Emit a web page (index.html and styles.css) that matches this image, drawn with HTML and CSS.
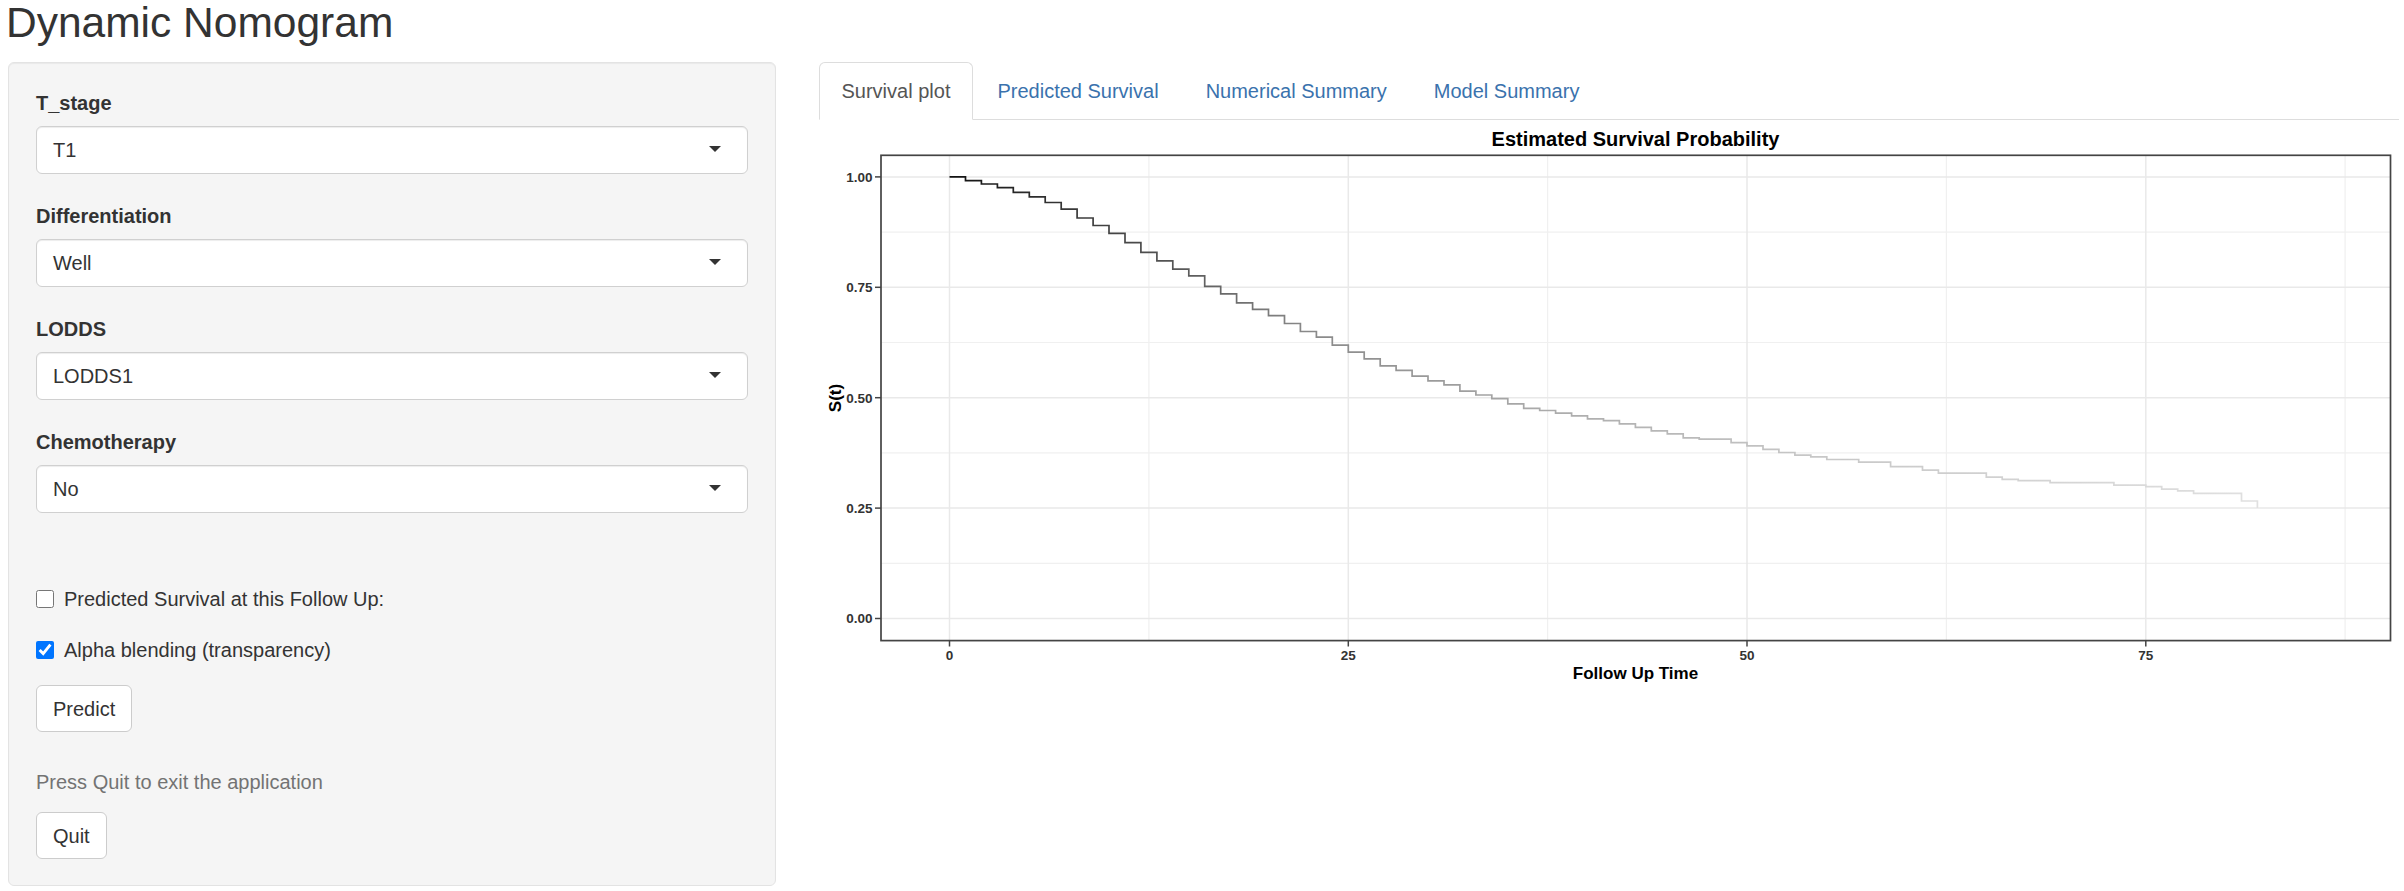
FILE: index.html
```html
<!DOCTYPE html>
<html>
<head>
  <title>Dynamic Nomogram</title>
  <link rel="stylesheet" href="styles.css">
</head>
<body>
  <h1 class="title">Dynamic Nomogram</h1>
  <div class="layout">
    <div class="well">
      <div class="form-group">
        <label class="control-label">T_stage</label>
        <div class="selectize-input">T1</div>
      </div>
      <div class="form-group">
        <label class="control-label">Differentiation</label>
        <div class="selectize-input">Well</div>
      </div>
      <div class="form-group">
        <label class="control-label">LODDS</label>
        <div class="selectize-input">LODDS1</div>
      </div>
      <div class="form-group">
        <label class="control-label">Chemotherapy</label>
        <div class="selectize-input">No</div>
      </div>

      <div class="checkbox first">
        <label><input type="checkbox" name="trySurvival"><span>Predicted Survival at this Follow Up:</span></label>
      </div>
      <div class="checkbox">
        <label><input type="checkbox" name="alpha" checked><span>Alpha blending (transparency)</span></label>
      </div>
      <button class="btn btn-predict" type="button">Predict</button>
      <p class="help-text">Press Quit to exit the application</p>
      <button class="btn" type="button">Quit</button>
    </div>

    <div class="main">
      <ul class="nav-tabs">
        <li class="active"><a href="#">Survival plot</a></li>
        <li><a href="#">Predicted Survival</a></li>
        <li><a href="#">Numerical Summary</a></li>
        <li><a href="#">Model Summary</a></li>
      </ul>
      <div class="tab-content">
        <!-- plot drawn in page coordinates -->
        <svg class="plot" viewBox="819 120 1580 580" width="1580" height="580">
          <defs>
            <linearGradient id="fade" gradientUnits="userSpaceOnUse" x1="949.5" y1="0" x2="2257.4" y2="0">
              <stop offset="0" stop-color="#111"/>
              <stop offset="0.08" stop-color="#333"/>
              <stop offset="0.17" stop-color="#555"/>
              <stop offset="0.27" stop-color="#888"/>
              <stop offset="0.45" stop-color="#aaa"/>
              <stop offset="0.65" stop-color="#c6c6c6"/>
              <stop offset="1" stop-color="#e0e0e0"/>
            </linearGradient>
          </defs>

          <text class="plot-title" x="1635.5" y="146" text-anchor="middle">Estimated Survival Probability</text>

          <g class="grid-minor">
            <line x1="881" x2="2390" y1="232.1" y2="232.1"/>
            <line x1="881" x2="2390" y1="342.5" y2="342.5"/>
            <line x1="881" x2="2390" y1="452.9" y2="452.9"/>
            <line x1="881" x2="2390" y1="563.3" y2="563.3"/>
            <line x1="1148.9" x2="1148.9" y1="155" y2="640.5"/>
            <line x1="1547.6" x2="1547.6" y1="155" y2="640.5"/>
            <line x1="1946.4" x2="1946.4" y1="155" y2="640.5"/>
            <line x1="2345.1" x2="2345.1" y1="155" y2="640.5"/>
          </g>
          <g class="grid-major">
            <line x1="881" x2="2390" y1="176.9" y2="176.9"/>
            <line x1="881" x2="2390" y1="287.3" y2="287.3"/>
            <line x1="881" x2="2390" y1="397.7" y2="397.7"/>
            <line x1="881" x2="2390" y1="508.1" y2="508.1"/>
            <line x1="881" x2="2390" y1="618.5" y2="618.5"/>
            <line x1="949.5" x2="949.5" y1="155" y2="640.5"/>
            <line x1="1348.3" x2="1348.3" y1="155" y2="640.5"/>
            <line x1="1747" x2="1747" y1="155" y2="640.5"/>
            <line x1="2145.8" x2="2145.8" y1="155" y2="640.5"/>
          </g>

          <path class="curve" d="M949.5,176.9H965.5V180.6H981.4V184H997.4V187.6H1013.3V192.4H1029.3V196.8H1045.2V202.5H1061.2V209.1H1077.1V218H1093.1V225.5H1109V233.4H1125V242.7H1140.9V252.4H1156.9V260.8H1172.8V269.2H1188.8V275.8H1204.7V286.4H1220.7V293.9H1236.6V302.8H1252.6V309.4H1268.5V315.6H1284.5V323.5H1300.4V331.5H1316.4V337.2H1332.3V345.1H1348.3V352.2H1364.2V358.8H1380.2V365.9H1396.1V370.3H1412.1V376.1H1428V380.9H1444V384.9H1459.9V391.1H1475.9V395H1491.8V398.6H1507.8V403.9H1523.7V408.3H1539.7V410.5H1555.6V413.2H1571.6V415.8H1587.5V418.9H1603.5V420.7H1619.4V423.8H1635.4V427.3H1651.3V430.8H1667.3V433.9H1683.2V437.9H1699.2V439.2H1731.1V442.7H1747V445.8H1763V449.4H1778.9V452.5H1794.9V455.1H1810.8V456.9H1826.8V459.5H1858.7V462.2H1890.6V466.6H1922.5V470.1H1938.4V473.2H1986.3V477.2H2002.2V479.4H2018.2V480.7H2050.1V482.7H2113.9V485.1H2145.8V486.7H2161.7V489.1H2177.7V490.9H2193.6V493.3H2241.5V501H2257.4V508.1"/>

          <rect class="panel" x="881" y="155.3" width="1509.5" height="485.3"/>

          <g class="ticks">
            <line x1="875" x2="881" y1="176.9" y2="176.9"/>
            <line x1="875" x2="881" y1="287.3" y2="287.3"/>
            <line x1="875" x2="881" y1="397.7" y2="397.7"/>
            <line x1="875" x2="881" y1="508.1" y2="508.1"/>
            <line x1="875" x2="881" y1="618.5" y2="618.5"/>
            <line x1="949.5" x2="949.5" y1="640.6" y2="646.5"/>
            <line x1="1348.3" x2="1348.3" y1="640.6" y2="646.5"/>
            <line x1="1747" x2="1747" y1="640.6" y2="646.5"/>
            <line x1="2145.8" x2="2145.8" y1="640.6" y2="646.5"/>
          </g>
          <g class="tick-labels" text-anchor="end">
            <text x="872.5" y="181.7">1.00</text>
            <text x="872.5" y="292.1">0.75</text>
            <text x="872.5" y="402.5">0.50</text>
            <text x="872.5" y="512.9">0.25</text>
            <text x="872.5" y="623.3">0.00</text>
          </g>
          <g class="tick-labels" text-anchor="middle">
            <text x="949.5" y="659.5">0</text>
            <text x="1348.3" y="659.5">25</text>
            <text x="1747" y="659.5">50</text>
            <text x="2145.8" y="659.5">75</text>
          </g>

          <text class="axis-title" transform="translate(840.5,398) rotate(-90)" text-anchor="middle">S(t)</text>
          <text class="axis-title" x="1635.5" y="678.5" text-anchor="middle">Follow Up Time</text>
        </svg>
      </div>
    </div>
  </div>
</body>
</html>
```

FILE: styles.css
```css
/* page */
body {
  margin: 0;
  padding: 0 5px 0 8px;
  font-family: "Liberation Sans", Arial, sans-serif;
  font-size: 20px;
  line-height: 28px;
  color: #333;
  background: #fff;
}
.title {
  margin: 0 0 16px -2px;
  font-size: 42.5px;
  line-height: 46px;
  font-weight: normal;
  color: #333;
}
.layout {
  display: flex;
  align-items: flex-start;
  gap: 43px;
}

/* sidebar */
.well {
  width: 768px;
  box-sizing: border-box;
  padding: 26px 27px 26px;
  background-color: #f5f5f5;
  border: 1px solid #e3e3e3;
  border-radius: 6px;
  box-shadow: inset 0 1px 1px rgba(0, 0, 0, .05);
}
.form-group {
  margin-bottom: 28px;
}
.control-label {
  display: block;
  font-weight: bold;
  margin-bottom: 9px;
}
.selectize-input {
  position: relative;
  height: 48px;
  box-sizing: border-box;
  padding: 9px 16px;
  background: #fff;
  border: 1px solid #d0d0d0;
  border-radius: 6px;
  box-shadow: inset 0 1px 1px rgba(0, 0, 0, .075);
}
.selectize-input::after {
  content: "";
  position: absolute;
  right: 26px;
  top: 19px;
  border-style: solid;
  border-width: 6px 6px 0;
  border-color: #333 transparent transparent;
}
.checkbox {
  margin-top: 23px;
}
/* the form-group margin collapses into this one */
.checkbox.first {
  margin-top: 72px;
}
.checkbox label {
  display: flex;
  align-items: center;
  gap: 10px;
}
.checkbox input {
  width: 18px;
  height: 18px;
  margin: 0;
}
.btn {
  display: block;
  height: 47px;
  padding: 0 16px;
  font: inherit;
  color: #333;
  background-color: #fff;
  border: 1px solid #ccc;
  border-radius: 6px;
  cursor: pointer;
}
.btn-predict {
  margin-top: 21px;
}
.help-text {
  margin: 36px 0 16px;
  color: #737373;
}

/* main panel */
.main {
  flex: 1;
  min-width: 0;
}
.nav-tabs {
  display: flex;
  list-style: none;
  margin: 0;
  padding: 0;
  border-bottom: 1px solid #ddd;
}
.nav-tabs li {
  margin-right: 2px;
  margin-bottom: -1px;
}
.nav-tabs a {
  display: block;
  padding: 14px 21.5px;
  border: 1px solid transparent;
  border-radius: 6px 6px 0 0;
  color: #3a72ad;
  text-decoration: none;
}
.nav-tabs li.active a {
  color: #555;
  background-color: #fff;
  border-color: #ddd #ddd transparent;
}

/* plot */
.plot {
  display: block;
}
.plot text {
  font-family: "Liberation Sans", Arial, sans-serif;
}
.plot-title {
  font-size: 20px;
  font-weight: bold;
  fill: #000;
}
.grid-minor line {
  stroke: #f0f0f0;
  stroke-width: 1.2;
}
.grid-major line {
  stroke: #e9e9e9;
  stroke-width: 1.5;
}
.curve {
  fill: none;
  stroke: url(#fade);
  stroke-width: 1.7;
}
.panel {
  fill: none;
  stroke: #444;
  stroke-width: 1.7;
}
.ticks line {
  stroke: #444;
  stroke-width: 1.5;
}
.tick-labels text {
  font-size: 13.5px;
  font-weight: bold;
  fill: #333;
}
.axis-title {
  font-size: 17px;
  font-weight: bold;
  fill: #000;
}
```
